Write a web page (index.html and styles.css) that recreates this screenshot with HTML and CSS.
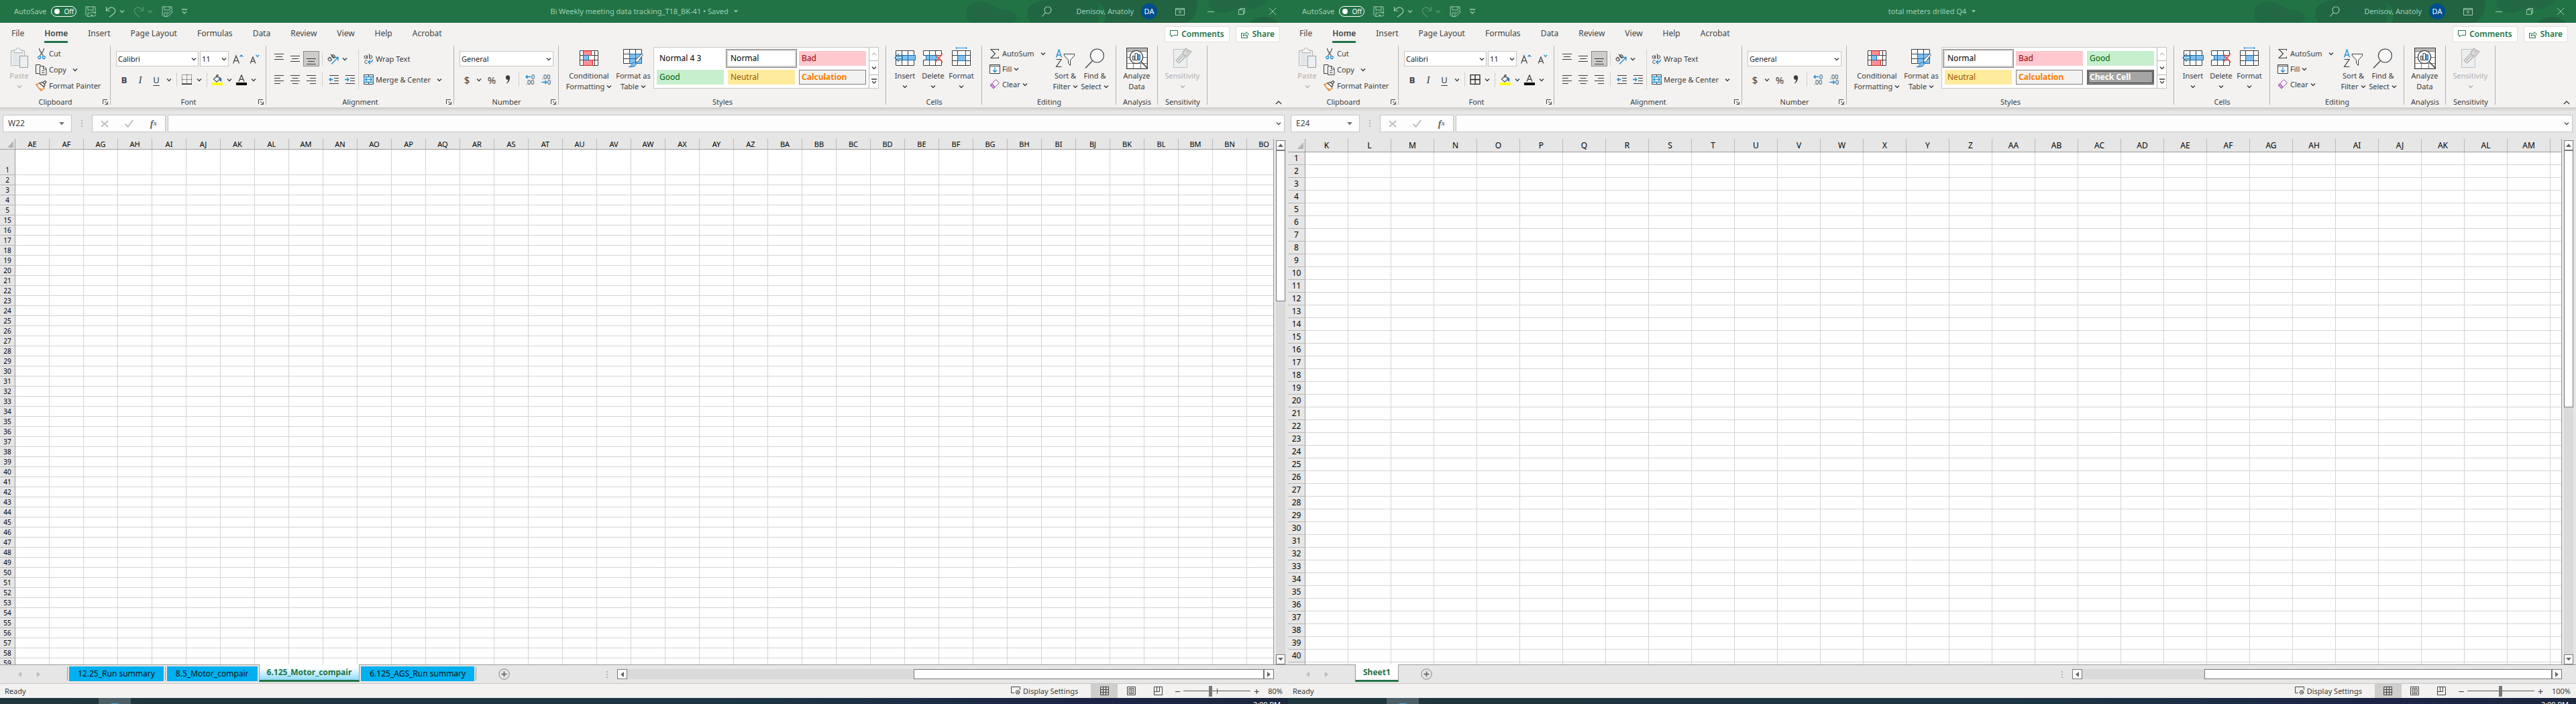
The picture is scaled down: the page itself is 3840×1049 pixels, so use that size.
FILE: index.html
```html
<!DOCTYPE html>
<html lang="en">
<head>
<meta charset="utf-8">
<title>Spreadsheets</title>
<link rel="stylesheet" href="styles.css">
</head>
<body>
<svg class="sprite" aria-hidden="true">
  <symbol id="caret" viewBox="0 0 8 6"><path d="M1 1.5l3 3 3-3" fill="none" stroke="currentColor" stroke-width="1.4"/></symbol>
  <symbol id="save" viewBox="0 0 17 17"><path d="M7 15.500H3L1 13.500V1h14v6M4 1v5h8V1M4 15.500V10h3" fill="none" stroke="currentColor"/><path d="M8 11.500a4 3.500 0 0 1 7-1.500M15.500 7.500V10.500H12.500M16 12.500a4 3.500 0 0 1-7 1.500M8.500 16.500V13.500H11.500" fill="none" stroke="currentColor"/></symbol>
  <symbol id="saveedit" viewBox="0 0 17 17"><path d="M7 15.500H3L1 13.500V1h14v5M4 1v5h8V1M4 15.500V10h5" fill="none" stroke="currentColor"/><path d="M7 16l1-3.500 6.500-5.500 1.800 2L10 14.800z" fill="none" stroke="currentColor"/></symbol>
  <symbol id="undo" viewBox="0 0 16 17"><path d="M1.500 1v6h6M2 6.500C5 2 10 1 13 3.500s2 6-.5 8L6 16.500" fill="none" stroke="currentColor" stroke-width="1.200"/></symbol>
  <symbol id="redo" viewBox="0 0 16 17"><path d="M14.500 1v6h-6M14 6.500C11 2 6 1 3 3.500s-2 6 .5 8L9 16.500" fill="none" stroke="currentColor" stroke-width="1.200"/></symbol>
  <symbol id="qat" viewBox="0 0 8 8"><path d="M0 1h8M1 4l3 3 3-3" fill="none" stroke="currentColor" stroke-width="1.300"/></symbol>
  <symbol id="tri" viewBox="0 0 8 5"><path d="M0 0h8L4 4.500z" fill="currentColor"/></symbol>
  <symbol id="search" viewBox="0 0 15 16"><circle cx="9" cy="6" r="5" fill="none" stroke="currentColor" stroke-width="1.100"/><path d="M5.500 9.500L.5 15.500" stroke="currentColor" stroke-width="1.100"/></symbol>
  <symbol id="ribbonopt" viewBox="0 0 14 11"><path d="M.5.5h13v10H.5zM.5 2.500h13M7 9V4.500M4.800 6.500L7 4.300l2.200 2.200" fill="none" stroke="currentColor"/></symbol>
  <symbol id="min" viewBox="0 0 10 10"><path d="M0 5.500h10" stroke="currentColor"/></symbol>
  <symbol id="restore" viewBox="0 0 10 10"><path d="M.5 2.500h7v7h-7zM2.500 2.500V.500h7v7h-2" fill="none" stroke="currentColor"/></symbol>
  <symbol id="close" viewBox="0 0 10 10"><path d="M0 0l10 10M10 0L0 10" stroke="currentColor"/></symbol>
  <symbol id="comment" viewBox="0 0 12 11"><path d="M.5.5h11v7H5l-2.500 2.500V7.500h-2z" fill="none" stroke="currentColor"/></symbol>
  <symbol id="share" viewBox="0 0 12 12"><path d="M4 4.500H.5v7h9V9M3 9c.5-3 2-4.500 5-4.500V2.500l3.500 3.500L8 9V7C6 7 4.500 7.500 3 9z" fill="none" stroke="currentColor"/></symbol>
  <symbol id="paste" viewBox="0 0 28 31"><path d="M1.500 4.500h20v22h-20z" fill="#eceff0" stroke="#b3b3b3"/><path d="M4 7h15v17H4z" fill="#e3e6e8"/><path d="M6 7.500v-4h3a3 3 0 0 1 6 0h3v4z" fill="#f8f8f8" stroke="#b3b3b3"/><path d="M14.500 12.500h12v17h-12z" fill="#eceff0" stroke="#9a9a9a"/></symbol>
  <symbol id="cut" viewBox="0 0 12 17"><path d="M2.500 0c0 4 3 6 6.500 12M9.500 0c0 4-3 6-6.500 12" fill="none" stroke="#555" stroke-width="1.200"/><circle cx="2.700" cy="13.600" r="1.900" fill="none" stroke="#1e8bcd" stroke-width="1.300"/><circle cx="9.300" cy="13.600" r="1.900" fill="none" stroke="#1e8bcd" stroke-width="1.300"/></symbol>
  <symbol id="copy" viewBox="0 0 17 16"><path d="M5.500 13.500h-5V.500H7l1 1" fill="none" stroke="#3b3b3b"/><path d="M6.500 2.500h5.500l4 4v9H6.500zM11.500 2.500v4.500h4.500" fill="#fff" stroke="#3b3b3b"/><path d="M9 9.500h4.500M9 12.500h4.500" stroke="#3b3b3b"/></symbol>
  <symbol id="painter" viewBox="0 0 17 16"><path d="M1 6l7 9 5-3.500-1-2.500-6-5z" fill="#fff" stroke="#e07b1a" stroke-width="1.400"/><path d="M3 9.500l5.500 5 3-2z" fill="#f0b070"/><path d="M6 4l6.500 5.500 1.500-3-4-4zM11 3l3-2.500L16 2l-3 3.500" fill="#fff" stroke="#444" stroke-width="1.200"/></symbol>
  <symbol id="growA" viewBox="0 0 16 14"><path d="M.7 13.500L5 2l4.500 11.500M2.200 9.700h6" fill="none" stroke="#444" stroke-width="1.300"/><path d="M10.500 3.500l2.300-2.300 2.300 2.300" fill="none" stroke="#1e8bcd" stroke-width="1.300"/></symbol>
  <symbol id="shrinkA" viewBox="0 0 16 14"><path d="M2.200 13.500L6 4l3.800 9.500M3.600 10.300h5" fill="none" stroke="#444" stroke-width="1.300"/><path d="M10.500 1l2.300 2.300L15.100 1" fill="none" stroke="#1e8bcd" stroke-width="1.300"/></symbol>
  <symbol id="borderDots" viewBox="0 0 16 15"><path d="M.5 0v13M7.500 0v13M14.500 0v13M0 .5h16M0 7.500h16" fill="none" stroke="#444" stroke-dasharray="1 1"/><path d="M0 14.200h15" stroke="#000" stroke-width="1.400"/></symbol>
  <symbol id="borderAll" viewBox="0 0 16 15"><path d="M1 .700h14v13.600H1zM8 .700v13.600M1 7.500h14" fill="none" stroke="#222" stroke-width="1.300"/></symbol>
  <symbol id="fillcolor" viewBox="0 0 16 16"><path d="M2.500 7l5-5 4.500 4.500-5 4.500z" fill="#fff" stroke="#444" stroke-width="1.100"/><path d="M7 5V.5h2V3" fill="none" stroke="#444"/><path d="M12 9.500V6.500l-1.500-2c3 0 4 2 3 5.500z" fill="#2b6ca8" stroke="#2b6ca8"/><path d="M0 12h16v4H0z" fill="#ff0"/></symbol>
  <symbol id="fontcolor" viewBox="0 0 16 16"><path d="M4 10.500L8 .8l4 9.700M5.300 7.300h5.400" fill="none" stroke="#444" stroke-width="1.300"/><path d="M0 12h16v4H0z" fill="#000"/></symbol>
  <symbol id="alTop" viewBox="0 0 14 16"><path d="M0 .5h14M2 4.500h10M0 8.500h14" stroke="#3b3b3b"/></symbol>
  <symbol id="alMid" viewBox="0 0 14 16"><path d="M0 3.500h14M2 7.500h10M0 11.500h14" stroke="#3b3b3b"/></symbol>
  <symbol id="alBot" viewBox="0 0 14 16"><path d="M0 7.500h14M2 11.500h10M0 15.500h14" stroke="#3b3b3b"/></symbol>
  <symbol id="left" viewBox="0 0 14 14"><path d="M0 .5h14M0 4.500h9M0 8.500h14M0 12.500h9" stroke="#3b3b3b"/></symbol>
  <symbol id="center" viewBox="0 0 14 14"><path d="M0 .5h14M2.500 4.500h9M0 8.500h14M2.500 12.500h9" stroke="#3b3b3b"/></symbol>
  <symbol id="right" viewBox="0 0 14 14"><path d="M0 .5h14M5 4.500h9M0 8.500h14M5 12.500h9" stroke="#3b3b3b"/></symbol>
  <symbol id="orient" viewBox="0 0 17 16"><g fill="none" stroke="#444" stroke-width="1.100"><ellipse cx="3.500" cy="8.500" rx="2" ry="2.600" transform="rotate(-45 3.500 8.500)"/><path d="M3 4.500l4 5M5 1l5.500 5.500"/><ellipse cx="9" cy="4" rx="2" ry="2.400" transform="rotate(-45 9 4)"/></g><path d="M6 15.500L15.500 6M11 5.500h5v5" fill="none" stroke="#1e8bcd" stroke-width="1.300"/></symbol>
  <symbol id="outdent" viewBox="0 0 15 14"><path d="M1 .5h14M8 4.500h7M8 8.500h7M1 12.500h14" stroke="#3b3b3b"/><path d="M6.500 6.500H1M3.500 4L1 6.500 3.500 9" fill="none" stroke="#1e8bcd" stroke-width="1.300"/></symbol>
  <symbol id="indent" viewBox="0 0 15 14"><path d="M1 .5h14M8 4.500h7M8 8.500h7M1 12.500h14" stroke="#3b3b3b"/><path d="M0 6.500h5.500M3.500 4L6 6.500 3.500 9" fill="none" stroke="#1e8bcd" stroke-width="1.300"/></symbol>
  <symbol id="wrap" viewBox="0 0 15 16"><g fill="none" stroke="#444"><ellipse cx="3" cy="5" rx="2" ry="2"/><path d="M5.500 2.500V7.500M8.500 0v7.500M5.500 10.500a2.300 2.300 0 1 0 0 3.500"/><ellipse cx="10.700" cy="5" rx="2" ry="2.200"/></g><path d="M13.500 9c0 3-1.500 3.500-6 3.500M10 9.500l-3 3 3 3" fill="none" stroke="#1e8bcd" stroke-width="1.400"/></symbol>
  <symbol id="merge" viewBox="0 0 15 15"><path d="M.5.500h14v14H.5zM7.500.500v3M7.500 11.500v3" fill="#fff" stroke="#3b3b3b"/><path d="M.7 3.500h13.600v8H.700z" fill="#e8f3fb" stroke="#1e8bcd" stroke-width="1.300"/><path d="M3 7.500h9M5 5L2.700 7.500 5 10M10 5l2.300 2.500L10 10" fill="none" stroke="#1e8bcd" stroke-width="1.200"/></symbol>
  <symbol id="comma" viewBox="0 0 8 13"><path d="M1 3.500a3 3 0 0 1 6-.5c.5 4-1.500 7.500-5 9.500l-.5-.5c2-1.500 3-3.500 3-5.500C2.500 7.500 1 6 1 3.500z" fill="#3b3b3b"/></symbol>
  <symbol id="arrowL" viewBox="0 0 9 7"><path d="M8.500 3.500H1M3.500 1L1 3.500 3.500 6" fill="none" stroke="#1e8bcd" stroke-width="1.300"/></symbol>
  <symbol id="arrowR" viewBox="0 0 9 7"><path d="M.5 3.500H8M5.500 1L8 3.500 5.500 6" fill="none" stroke="#1e8bcd" stroke-width="1.300"/></symbol>
  <symbol id="condfmt" viewBox="0 0 28 23"><path d="M.5.500h27v22H.500zM.5 7.500h27M.5 14.500h27M5.500 0v23M22.500 0v23" fill="#fff" stroke="#3b3b3b"/><path d="M5.500.700h12v7h-12zM5.500 14.500h14v8h-14z" fill="#ff8f95" stroke="#d22"/><path d="M5.500 7.500h8v7h-8z" fill="#83beec" stroke="#0a6cbd"/></symbol>
  <symbol id="fmttable" viewBox="0 0 30 29"><path d="M.5 1.500h27v21H.500zM.5 8.500h27M.5 15.500h27M9.500 1v22M18.500 1v22" fill="#fff" stroke="#3b3b3b"/><path d="M10 9h18v14H10z" fill="#83beec"/><path d="M18.500 9v14M9.500 15.500h18M9.500 8.500h18v14h-18z" fill="none" stroke="#0a6cbd"/><path d="M18 18L28 8l1.500 1.500L21 21z" fill="#fff" stroke="#555"/><path d="M8 27.500c3 0 4-1 5-4 1.500-3 4-3 6-1 1 3-3 6-11 5z" fill="#83beec" stroke="#0a6cbd"/></symbol>
  <symbol id="insert" viewBox="0 0 32 23"><path d="M2.500.500h27v22h-27zM2.500 7.500h27M2.500 14.500h27M11.500 0v23M20.500 0v23" fill="#fff" stroke="#3b3b3b"/><path d="M12 7.500h19.500v7H12z" fill="#83beec" stroke="#0a6cbd"/><path d="M20.500 8v6" stroke="#0a6cbd"/><path d="M12 9.500H4M12 12.500H4M7 5L1 11l6 6" fill="none" stroke="#1e8bcd" stroke-width="1.400"/></symbol>
  <symbol id="delete" viewBox="0 0 30 23"><path d="M.5.500h27v7H.500zM.5 14.500h27v8H.500zM9.500 0v7M18.500 0v7M9.500 15v8M18.500 15v8" fill="#fff" stroke="#3b3b3b"/><path d="M4.500 7.500H18l3 3.500-3 3.500H4.500zM9.500 8v6" fill="#83beec" stroke="#0a6cbd"/><path d="M18 5l11 13M29 5L18 18" stroke="#e8474a" stroke-width="1.500"/></symbol>
  <symbol id="format" viewBox="0 0 28 34"><path d="M.5 5.500h27v22H.500zM.5 12.500h27M.5 20.500h27M8.500 5v23M20.500 5v23" fill="#fff" stroke="#3b3b3b"/><path d="M8.500 12.500h12v8h-12z" fill="#83beec" stroke="#0a6cbd"/><path d="M6.500 0v3M21.500 0v3M6.500 1.500h15" stroke="#1e8bcd" stroke-width="1.200"/></symbol>
  <symbol id="sigma" viewBox="0 0 14 14"><path d="M12.500 2.500V.500H1l6.500 6.500L1 13.500h11.500v-2" fill="none" stroke="#3b3b3b" stroke-width="1.100"/></symbol>
  <symbol id="fill" viewBox="0 0 16 14"><path d="M.5.500h15v13H.500zM.5 2.500h15" fill="#fff" stroke="#3b3b3b"/><path d="M8 4v7.500M5 8.500l3 3 3-3" fill="none" stroke="#1e8bcd" stroke-width="1.300"/></symbol>
  <symbol id="clear" viewBox="0 0 16 15"><path d="M1 9L9.500.700l5 4.800L6 14z" fill="#fff" stroke="#8c3a9c"/><path d="M1 9l2.500-2.500 5 5L6 14z" fill="#cf9ad8" stroke="#8c3a9c"/></symbol>
  <symbol id="sort" viewBox="0 0 30 28"><path d="M1.500 12.500L5.500 1l4 11.500M2.800 9h5.400" fill="none" stroke="#1e8bcd" stroke-width="1.300"/><path d="M1.500 15.500h7.500l-7.500 11h8" fill="none" stroke="#3b3b3b" stroke-width="1.200"/><path d="M13 7.500h15.500v2.500l-6 6.500v8l-3-3v-5l-6-6.500z" fill="#fff" stroke="#3b3b3b"/></symbol>
  <symbol id="find" viewBox="0 0 30 30"><circle cx="18.500" cy="11" r="10" fill="#f8f8f8" stroke="#3b3b3b" stroke-width="1.200"/><path d="M11.500 18.500L1 29.500" stroke="#3b3b3b" stroke-width="1.200"/></symbol>
  <symbol id="analyze" viewBox="0 0 32 32"><path d="M.7.700h30.600v30.600H.700z" fill="#fff" stroke="#3b3b3b" stroke-width="1.300"/><path d="M1.500 1.500h29V5h-29z" fill="#b8b8b8"/><path d="M1 5.500h30M1 14.500h30M1 23.500h30M10.500 23v8M21.500 23v8" stroke="#777"/><circle cx="15" cy="14" r="9.700" fill="#fff" stroke="#3b3b3b" stroke-width="1.300"/><path d="M9.500 12.500h3v6h-3z" fill="#ccc" stroke="#444"/><path d="M13 8.500h3.500v10H13z" fill="#fff" stroke="#444"/><path d="M17 10.500h3.500v8H17z" fill="#5aa7e0" stroke="#2b6ca8"/><path d="M22 21l9.500 9.500" stroke="#3b3b3b" stroke-width="1.500"/></symbol>
  <symbol id="sensitivity" viewBox="0 0 28 31"><path d="M.5 2.500h20v27H.500z" fill="#eceff0" stroke="#bdbdbd"/><path d="M4 19L14 9l4.500 4.500-10 9.500z" fill="#e8e8e8" stroke="#b5b5b5" stroke-width="1.300"/><path d="M7 19.500l7.500-7M14 7l5-6 3.500 3-2 3 3-3 3.500 2-6 7-3-1.500-2 1z" fill="#d8d8d8" stroke="#b5b5b5" stroke-width="1.300"/></symbol>
  <symbol id="launcher" viewBox="0 0 8 8"><path d="M.5 7V.500H7M3 3l4 4M7.500 3.500v4h-4" fill="none" stroke="#444"/></symbol>
  <symbol id="chevUp" viewBox="0 0 10 6"><path d="M1 5l4-4 4 4" fill="none" stroke="currentColor" stroke-width="1.300"/></symbol>
  <symbol id="cancel" viewBox="0 0 12 11"><path d="M1 1l10 9M11 1L1 10" stroke="#bdbdbd" stroke-width="1.800"/></symbol>
  <symbol id="accept" viewBox="0 0 13 12"><path d="M1 7l3.500 4L12 1" fill="none" stroke="#bdbdbd" stroke-width="2"/></symbol>
  <symbol id="plus" viewBox="0 0 17 17"><circle cx="8.500" cy="8.500" r="7.700" fill="none" stroke="#808080"/><path d="M8.500 4.500v8M4.500 8.500h8" stroke="#707070" stroke-width="1.800"/></symbol>
  <symbol id="display" viewBox="0 0 15 13"><path d="M5 9.500H.500V.500h13V5" fill="none" stroke="#444"/><circle cx="10" cy="8.500" r="2.600" fill="none" stroke="#444" stroke-width="1.600" stroke-dasharray="1.600 .8"/><circle cx="10" cy="8.500" r="1" fill="#444"/></symbol>
  <symbol id="vNormal" viewBox="0 0 13 13"><path d="M.5.500h12v12H.500zM4.500 0v13M8.500 0v13M0 4.500h13M0 8.500h13" fill="none" stroke="#444"/></symbol>
  <symbol id="vPage" viewBox="0 0 13 13"><path d="M.5.500h12v12H.500zM3 2.500h7v8H3zM4.500 4.500h4M4.500 6.500h4M4.500 8.500h4" fill="none" stroke="#444"/></symbol>
  <symbol id="vBreak" viewBox="0 0 13 13"><path d="M.5.500h12v12H.500zM4.500 0v7.500M8.500 0v7.500M.5 7.500h8" fill="none" stroke="#444"/></symbol>
  <symbol id="blobs" viewBox="0 0 480 34"><g fill="#226342"><path d="M0 17C2 5 14 0 27 3s16 9 26 11 18 2 22 9-4 11-10 11H10C2 32-1 25 0 17z" opacity=".6"/><path d="M92 14C100-3 125-2 198 0v34H98c-6-4-9-12-6-20z" opacity=".8"/><path d="M196 0h148c4 12-3 26-14 34H204c10-12 2-22-8-34z"/><path d="M362 0h86c-6 10-20 16-34 14s-30 8-40 4-15-10-12-18z" opacity=".6"/><ellipse cx="444" cy="34" rx="20" ry="9"/></g></symbol>
</svg>
<div class="desktop" id="desktop"></div>
<script src="app.js"></script>
</body>
</html>
```
FILE: styles.css
```css
* { box-sizing: border-box; }

body {
  margin: 0;
  font-family: "Noto Sans", "Open Sans", sans-serif;
  font-size: 11px;
  line-height: 16px;
  color: #3b3b3b;
  background: #e6e6e6;
}

button, input, select {
  font: inherit;
  color: inherit;
  margin: 0;
  padding: 0;
  border: 0;
  background: none;
  border-radius: 0;
}

button {
  display: flex;
  align-items: center;
  justify-content: center;
  flex: none;
  white-space: nowrap;
}

svg { display: block; flex: none; }
.sprite { position: absolute; width: 0; height: 0; }

.desktop { display: grid; grid-template-columns: 1fr 1fr; height: 100vh; }
.window { display: flex; flex-direction: column; min-width: 0; min-height: 0; overflow: hidden; }

/* title bar */
.titlebar {
  position: relative;
  display: grid;
  grid-template-columns: 1fr auto 1fr;
  align-items: center;
  height: 34px;
  background: #217346;
  color: #a0cdb2;
}
.titlebar .pattern { position: absolute; right: 0; top: 0; }
.quick { display: flex; align-items: center; gap: 13px; padding-left: 21px; }
.quick button { gap: 5px; }
.quick .off { opacity: .4; }
.autosave { display: flex; align-items: center; gap: 7px; }
.switch {
  display: flex;
  align-items: center;
  gap: 6px;
  width: 38px;
  height: 16px;
  padding-left: 4px;
  border: 1px solid #fff;
  border-radius: 8px;
  font-size: 10px;
  color: #fff;
}
.switch input { appearance: none; width: 8px; height: 8px; border-radius: 50%; background: #fff; }
.doc { display: flex; align-items: center; gap: 8px; margin: 0; font-size: 11px; font-weight: 400; }
.system { position: relative; display: flex; align-items: center; justify-content: flex-end; }
.user { margin: 0 11px 0 36px; }
.avatar {
  width: 24px;
  height: 24px;
  margin-right: 11px;
  border-radius: 50%;
  background: #004e8c;
  color: #fff;
  line-height: 24px;
  text-align: center;
}
.system .sysbtn { width: 46px; height: 34px; }

/* ribbon tabs */
.tabs { display: flex; align-items: center; height: 33px; padding: 0 12px 0 17px; background: #f3f2f1; font-size: 12px; }
.tabs nav { display: flex; gap: 30px; flex: 1; }
.tabs a { display: block; color: #444; text-decoration: none; height: 26px; padding-top: 4px; }
.tabs a.on { font-weight: 600; border-bottom: 3px solid #217346; }
.tabs button {
  gap: 5px;
  height: 24px;
  margin-left: 9px;
  padding: 0 7px;
  background: #fff;
  border: 1px solid #e1dfdd;
  border-radius: 2px;
  color: #217346;
  font-weight: 600;
}

/* ribbon */
.ribbon { display: flex; padding: 1px 9px 2px 0; background: #f3f2f1; }
.group {
  display: flex;
  flex-direction: column;
  flex: none;
  background: linear-gradient(#b5b3b1, #b5b3b1) right top / 1px 88px no-repeat;
}
.group .body { display: flex; height: 78px; }
.group .name { position: relative; line-height: 12px; text-align: center; }
.group .name button { position: absolute; right: 4px; top: 2px; }
.clipboard { width: 165px; }
.font { width: 232px; }
.alignment { width: 280px; }
.number { width: 156px; }
.styles { width: 488px; }
.cells { width: 143px; }
.editing { width: 200px; }
.analysis { width: 62px; }
.sensitivity { width: 74px; }
.clipboard .body { padding-left: 4px; }
.styles .body { padding-left: 8px; }
.cells .body { padding-left: 7px; }
.editing .body { padding-left: 11px; }
.collapse { margin: auto 0 2px auto; }

.big { flex-direction: column; justify-content: flex-start; align-self: flex-start; width: 42px; }
.big .pic { display: flex; align-items: center; justify-content: center; height: 37px; }
.big .line { display: flex; align-items: center; gap: 3px; height: 16px; }
.big.w49 { width: 49px; }
.big.w44 { width: 44px; }
.big.w58 { width: 58px; }
.big.w61 { width: 61px; }
.big.w73 { width: 73px; }
.big.w74 { width: 74px; }
.dim { color: #b1afad; }

.list { display: flex; flex-direction: column; }
.list .item { display: flex; height: 23px; }
.clipboard .list .item { height: 24px; }
.list .item .label, .wraps .label { gap: 3px; }
.list .pic { display: flex; justify-content: center; width: 17px; }
.editing .list { width: 91px; }
.editing .list .pic { width: 16px; }
.drop { width: 14px; }
.drop.far { margin-left: 6px; }

.rows { display: flex; flex-direction: column; gap: 8px; padding: 8px 0 0 8px; }
.rows .row { display: flex; align-items: center; height: 23px; }
.alignment .rows { padding-left: 7px; }
.alignment .toolset { width: 137px; }
.tool { width: 24px; height: 23px; font-size: 13px; }
.tool.slim { width: 22px; }
.tool.on { background: #cfcdcb; border: 1px solid #8a8886; }
.tool.bold { font-weight: 700; }
.tool.ital { font-family: "Liberation Serif", serif; font-style: italic; font-size: 15px; }
.tool.under { text-decoration: underline; text-underline-offset: 3px; }
.tool.sym { font-size: 15px; }
.sep { width: 1px; height: 21px; margin: 0 4px; background: #d2d0ce; }
.longsep { width: 1px; height: 59px; margin-top: 6px; background: #d2d0ce; }
.digits { flex-direction: column; font-size: 9px; line-height: 8px; }
.digits span { display: flex; align-items: center; }

.pick { position: relative; display: block; margin-right: 2px; }
.pick select {
  display: block;
  appearance: none;
  width: 123px;
  height: 23px;
  padding-left: 2px;
  background: #fff;
  border: 1px solid #c8c6c4;
  color: #222;
}
.pick svg { position: absolute; right: 3px; top: 9px; }
.pick.size select { width: 43px; }
.pick.numfmt select { width: 140px; }

/* cell styles gallery */
.gallery { display: flex; align-self: flex-start; width: 336px; margin: 2px 0 0 1px; background: #fff; border: 1px solid #c8c6c4; }
.swatches { display: grid; grid-template-columns: repeat(3, 100px); gap: 6px; padding: 5px 4px; }
.swatch { justify-content: flex-start; height: 22px; padding-left: 4px; font-size: 12px; color: #000; background: #fff; }
.swatch.current { box-shadow: 0 0 0 2px #d2d0ce, 0 0 0 3px #858381; }
.swatch.bad { background: #ffc7ce; color: #9c0006; }
.swatch.good { background: #c6efce; color: #006100; }
.swatch.neutral { background: #ffeb9c; color: #9c5700; }
.swatch.calc { background: #f2f2f2; color: #fa7d00; font-weight: 700; border: 1px solid #7f7f7f; padding-left: 3px; }
.swatch.check { background: #a5a5a5; color: #fff; font-weight: 700; border: 3px double #3f3f3f; padding-left: 1px; }
.galscroll { display: flex; flex-direction: column; flex: 1; }
.galscroll button { flex: 1; border-left: 1px solid #b5b3b1; border-bottom: 1px solid #b5b3b1; }
.galscroll button:last-child { border-bottom: 0; }

/* formula bar */
.formula {
  display: flex;
  align-items: center;
  padding: 11px 5px 10px 4px;
  background: linear-gradient(#cdcbc9, #e6e6e6 6px);
}
.namebox, .fx, .entry { display: flex; align-items: center; height: 26px; background: #fdfdfd; border: 1px solid #c6c6c6; }
.namebox { width: 103px; padding-right: 10px; color: #777; }
.namebox input { flex: 1; min-width: 0; padding-left: 7px; font-size: 12px; color: #444; }
.dots { display: flex; flex-direction: column; gap: 2px; margin: 0 14px; }
.dots i { width: 2px; height: 2px; background: #b0b0b0; }
.fx { justify-content: space-around; width: 110px; margin-right: 3px; }
.fx .fn { font-family: "Liberation Serif", serif; font-style: italic; font-weight: 700; font-size: 15px; color: #666; }
.fx .fn small { font-size: 10px; }
.entry { flex: 1; padding-right: 4px; color: #555; }
.entry input { flex: 1; }

/* grid */
.sheet { display: flex; flex: 1; min-height: 0; }
.cellsarea { flex: 1; min-width: 0; overflow: hidden; border-right: 1px solid #9b9b9b; background: linear-gradient(#e6e6e6, #e6e6e6) top / 100% 15px no-repeat #fff; }
.grid { table-layout: fixed; width: 0; border-collapse: separate; border-spacing: 0; color: #000; line-height: 14px; }
.grid th, .grid td { padding: 0; border-right: 1px solid #d4d4d4; border-bottom: 1px solid #d4d4d4; height: 15px; }
.grid th { background: #e6e6e6; font-weight: 400; text-align: center; border-right-color: #b8b8b8; }
.grid thead th { border-bottom-color: #9b9b9b; }
.grid tbody th, .grid .corner { border-right-color: #9b9b9b; }
.grid tbody th { font-size: 10px; vertical-align: bottom; border-bottom-color: #b8b8b8; }
.grid .corner svg { margin-left: auto; color: #b4b4b4; }
.grid .tall th, .grid .tall td { height: 38px; }
.grid.z80 col { width: 51px; }
.grid.z80 col.heads { width: 23px; }
.grid.z80 thead th { height: 16px; }
.grid.z100 { font-size: 12px; }
.grid.z100 col { width: 64px; }
.grid.z100 col.heads { width: 26px; }
.grid.z100 thead th { height: 20px; }
.grid.z100 tbody th { height: 19px; font-size: 12px; line-height: 18px; }

.vscroll { display: flex; flex-direction: column; width: 14px; margin: 2px 4px 0 3px; background: #dadada; }
.vscroll button { height: 15px; }
.vscroll .track { flex: 1; }
.vscroll button, .hscroll button, .thumb { background: #fff; border: 1px solid #777; color: #666; }
.hscroll { display: flex; height: 15px; margin-right: 21px; background: #dadada; }
.hscroll button { width: 15px; }
.hscroll .track { display: flex; justify-content: flex-end; flex: 1; }

/* sheet tabs */
.sheetbar { display: flex; height: 28px; border-top: 1px solid #9b9b9b; background: #e6e6e6; }
.sheetbar .pager { display: flex; width: 100px; padding-left: 15px; color: #bcbcbc; }
.sheetbar .pager button { width: 28px; height: 27px; }
.sheettabs { display: flex; flex: 1; align-items: flex-start; font-size: 12px; color: #111; }
.sheettabs .tab { height: 22px; margin: 2px 2px 0; padding: 0 13px; background: #00b0f0; }
.sheettabs .edge { width: 1px; height: 20px; margin-top: 3px; background: #9b9b9b; }
.sheettabs .tab.on {
  height: 26px;
  margin: -1px 0 0;
  padding: 0 11px;
  background: linear-gradient(#fff 20%, #8fdcf8);
  border: 1px solid #9b9b9b;
  border-top: 0;
  border-bottom: 3px solid #217346;
  color: #217346;
  font-weight: 700;
}
.sheettabs .tab.on.plain { background: #fff; }
.sheettabs .add { margin: 5px 0 0 33px; }
.sheetbar .dots { align-self: center; }
.sheetbar .hscroll { align-self: center; }

/* status bar */
.status { display: flex; align-items: center; height: 22px; padding: 0 8px 0 7px; background: #f3f2f1; border-top: 1px solid #c8c6c4; }
.status .ready { flex: 1; }
.status .display { gap: 3px; margin-right: 19px; }
.status .view { width: 40px; height: 21px; }
.status .view.on { background: #d0cecc; }
.status .zoom { width: 18px; font-size: 15px; }
.status input {
  appearance: none;
  width: 100px;
  height: 16px;
  background:
    linear-gradient(#555, #555) center / 100% 1px no-repeat,
    linear-gradient(#555, #555) center / 1px 8px no-repeat;
}
.status input::-webkit-slider-thumb { appearance: none; width: 5px; height: 16px; background: #777; }
.status output { margin-left: 8px; }

/* taskbar */
.taskbar { display: flex; justify-content: space-between; height: 9px; overflow: hidden; background: linear-gradient(90deg, #20373f, #1d3444 60%, #1b2446 85%, #1b2840); color: #fff; padding: 0 11px 0 147px; }
.taskbar .app { display: flex; align-items: flex-end; justify-content: center; width: 48px; background: #4d5f66; }
.taskbar .app i { width: 10px; height: 1px; background: #3fb4e0; }
.taskbar time { margin-top: 4px; line-height: 12px; }
```
FILE: app.js
```js
const icon = (id, w, h) => `<svg width="${w}" height="${h}" aria-hidden="true"><use href="#${id}"/></svg>`;
const caret = icon('caret', 8, 6);
const drop = (label, extra = '') => `<button class="drop ${extra}" aria-label="${label}">${caret}</button>`;
const tool = (id, w, h, label, cls = '') => `<button class="tool ${cls}" aria-label="${label}">${icon(id, w, h)}</button>`;
const sep = '<span class="sep"></span>';

const big = (id, w, h, lines, cls = '') => `
  <button class="big ${cls}"><span class="pic">${icon(id, w, h)}</span>${
    lines.map(l => `<span class="line">${l.replace('^', caret)}</span>`).join('')}</button>`;

const item = (id, w, h, text, after = '') => `
  <div class="item"><button class="label"><span class="pic">${icon(id, w, h)}</span>${text}</button>${after}</div>`;

const group = (cls, name, body, launcher) => `
  <section class="group ${cls}"><div class="body">${body}</div>
  <div class="name">${name}${launcher ? `<button aria-label="${name} settings">${icon('launcher', 8, 8)}</button>` : ''}</div></section>`;

const pick = (cls, label, value) => `
  <label class="pick ${cls}"><select aria-label="${label}"><option>${value}</option></select>${caret}</label>`;

const dots = '<span class="dots"><i></i><i></i><i></i></span>';

function titlebar(w) {
  return `<header class="titlebar">
    <svg class="pattern" width="480" height="34" aria-hidden="true"><use href="#blobs"/></svg>
    <div class="quick">
      <label class="autosave">AutoSave<span class="switch"><input type="checkbox" role="switch">Off</span></label>
      <button aria-label="Save">${icon('save', 17, 17)}</button>
      <button aria-label="Undo">${icon('undo', 16, 17)}${caret}</button>
      <button class="off" aria-label="Redo">${icon('redo', 16, 17)}${caret}</button>
      <button aria-label="Save as">${icon('saveedit', 17, 17)}</button>
      <button aria-label="Customize">${icon('qat', 8, 8)}</button>
    </div>
    <h1 class="doc">${w.title}${icon('tri', 6, 4)}</h1>
    <div class="system">
      <button aria-label="Search">${icon('search', 15, 16)}</button>
      <span class="user">Denisov, Anatoly</span><span class="avatar">DA</span>
      <button class="sysbtn" aria-label="Ribbon display">${icon('ribbonopt', 14, 11)}</button>
      <button class="sysbtn" aria-label="Minimize">${icon('min', 10, 10)}</button>
      <button class="sysbtn" aria-label="Restore">${icon('restore', 10, 10)}</button>
      <button class="sysbtn" aria-label="Close">${icon('close', 10, 10)}</button>
    </div></header>`;
}

function tabs() {
  const names = ['File', 'Home', 'Insert', 'Page Layout', 'Formulas', 'Data', 'Review', 'View', 'Help', 'Acrobat'];
  return `<div class="tabs"><nav>${
    names.map(n => `<a href="#"${n === 'Home' ? ' class="on"' : ''}>${n}</a>`).join('')}</nav>
    <button>${icon('comment', 12, 11)}Comments</button><button>${icon('share', 12, 12)}Share</button></div>`;
}

function ribbon(w) {
  return `<div class="ribbon">${
    group('clipboard', 'Clipboard', big('paste', 28, 31, ['Paste', '^'], 'w49 dim') + `<div class="list">${
      item('cut', 12, 17, 'Cut')}${item('copy', 17, 16, 'Copy', drop('Copy options', 'far'))}${item('painter', 17, 16, 'Format Painter')}</div>`, true)}${
    group('font', 'Font', `<div class="rows"><div class="row">${
      pick('', 'Font', 'Calibri')}${pick('size', 'Font size', '11')}${
      tool('growA', 16, 14, 'Increase font size')}${tool('shrinkA', 16, 14, 'Decrease font size')}</div>
      <div class="row"><button class="tool bold">B</button><button class="tool ital">I</button><button class="tool under">U</button>${
      drop('Underline')}${sep}${tool(w.border, 16, 15, 'Borders', 'slim')}${drop('Borders')}${sep}${
      tool('fillcolor', 16, 16, 'Fill color', 'slim')}${drop('Fill color')}${
      tool('fontcolor', 16, 16, 'Font color', 'slim')}${drop('Font color')}</div></div>`, true)}${
    group('alignment', 'Alignment', `<div class="rows toolset"><div class="row">${
      tool('alTop', 14, 16, 'Top')}${tool('alMid', 14, 16, 'Middle')}${tool('alBot', 14, 16, 'Bottom', 'on')}${sep}${
      tool('orient', 17, 16, 'Orientation', 'slim')}${drop('Orientation')}</div>
      <div class="row">${tool('left', 14, 14, 'Left')}${tool('center', 14, 14, 'Center')}${tool('right', 14, 14, 'Right')}${sep}${
      tool('outdent', 15, 14, 'Decrease indent')}${tool('indent', 15, 14, 'Increase indent')}</div></div>
      <span class="longsep"></span><div class="rows wraps">
      <div class="row"><button class="label">${icon('wrap', 15, 16)}Wrap Text</button></div>
      <div class="row"><button class="label">${icon('merge', 15, 15)}Merge &amp; Center</button>${drop('Merge options', 'far')}</div></div>`, true)}${
    group('number', 'Number', `<div class="rows"><div class="row">${pick('numfmt', 'Number format', 'General')}</div>
      <div class="row"><button class="tool slim sym">$</button>${drop('Currency')}<button class="tool sym">%</button>${
      tool('comma', 8, 13, 'Comma style')}${sep}
      <button class="tool digits"><span>${icon('arrowL', 9, 7)}0</span><span>.00</span></button>
      <button class="tool digits"><span>.00</span><span>${icon('arrowR', 9, 7)}0</span></button></div></div>`, true)}${
    group('styles', 'Styles', big('condfmt', 28, 23, ['Conditional', 'Formatting ^'], 'w74') +
      big('fmttable', 30, 29, ['Format as', 'Table ^'], 'w58') + `<div class="gallery"><div class="swatches">${
      w.styles.map(([n, c]) => `<button class="swatch ${c}">${n}</button>`).join('')}</div>
      <div class="galscroll"><button class="dim" aria-label="Up">${icon('chevUp', 8, 5)}</button><button aria-label="Down">${caret}</button><button aria-label="More">${icon('qat', 8, 8)}</button></div></div>`)}${
    group('cells', 'Cells', big('insert', 32, 23, ['Insert', '^']) + big('delete', 30, 23, ['Delete', '^']) + big('format', 28, 34, ['Format', '^']))}${
    group('editing', 'Editing', `<div class="list">${
      item('sigma', 14, 14, 'AutoSum', drop('Sum options', 'far'))}${item('fill', 16, 14, 'Fill', drop('Fill options'))}${item('clear', 16, 15, 'Clear', drop('Clear options'))}</div>` +
      big('sort', 30, 28, ['Sort &amp;', 'Filter ^'], 'w44') + big('find', 30, 30, ['Find &amp;', 'Select ^'], 'w44'))}${
    group('analysis', 'Analysis', big('analyze', 32, 32, ['Analyze', 'Data'], 'w61'))}${
    group('sensitivity', 'Sensitivity', big('sensitivity', 28, 31, ['Sensitivity', '^'], 'w73 dim'))}
    <button class="collapse" aria-label="Collapse ribbon">${icon('chevUp', 10, 6)}</button></div>`;
}

function formula(w) {
  return `<div class="formula"><div class="namebox"><input aria-label="Name box" value="${w.cell}">${icon('tri', 8, 5)}</div>${dots}
    <div class="fx"><button aria-label="Cancel">${icon('cancel', 12, 11)}</button><button aria-label="Enter">${icon('accept', 13, 12)}</button><button class="fn">f<small>x</small></button></div>
    <div class="entry"><input aria-label="Formula">${icon('caret', 8, 6)}</div></div>`;
}

const letters = n => (n > 26 ? String.fromCharCode(64 + Math.floor((n - 1) / 26)) : '') + String.fromCharCode(65 + (n - 1) % 26);
const range = (a, b) => Array.from({ length: b - a + 1 }, (_, i) => a + i);

function grid(w) {
  const cols = range(w.firstCol, w.lastCol).map(letters).concat(w.spareCol ? [''] : []);
  const cells = '<td></td>'.repeat(cols.length);
  return `<div class="sheet"><div class="cellsarea"><table class="grid ${w.zoomClass}">
    <colgroup><col class="heads">${'<col>'.repeat(cols.length)}</colgroup>
    <thead><tr><th class="corner"><svg width="12" height="12" viewBox="0 0 12 12"><path d="M10 1v10H1z" fill="currentColor"/></svg></th>${cols.map(c => `<th>${c}</th>`).join('')}</tr></thead>
    <tbody>${w.rows.map(r => `<tr${r === w.tallRow ? ' class="tall"' : ''}><th>${r}</th>${cells}</tr>`).join('')}</tbody></table></div>
    <div class="vscroll"><button aria-label="Scroll up"><svg width="8" height="5"><path d="M0 5h8L4 0z" fill="currentColor"/></svg></button>
    <div class="track"><div class="thumb" style="height:${w.vThumb}%"></div></div>
    <button aria-label="Scroll down">${icon('tri', 8, 5)}</button></div></div>`;
}

function sheetbar(w) {
  const prev = '<svg width="5" height="8"><path d="M5 0v8L0 4z" fill="currentColor"/></svg>';
  const next = '<svg width="5" height="8"><path d="M0 0v8l5-4z" fill="currentColor"/></svg>';
  return `<div class="sheetbar"><div class="pager"><button aria-label="Previous sheet">${prev}</button><button aria-label="Next sheet">${next}</button></div>
    <div class="sheettabs">${w.tabs}<button class="add" aria-label="New sheet">${icon('plus', 17, 17)}</button></div>${dots}
    <div class="hscroll" style="width:${w.hWidth}%"><button aria-label="Scroll left">${prev}</button><div class="track"><div class="thumb" style="width:${w.hThumb}%"></div></div><button aria-label="Scroll right">${next}</button></div></div>`;
}

function status(w) {
  return `<footer class="status"><span class="ready">Ready</span><button class="display">${icon('display', 15, 13)}Display Settings</button>
    <button class="view on" aria-label="Normal view">${icon('vNormal', 13, 13)}</button><button class="view" aria-label="Page layout">${icon('vPage', 13, 13)}</button><button class="view" aria-label="Page breaks">${icon('vBreak', 13, 13)}</button>
    <button class="zoom" aria-label="Zoom out">−</button><input type="range" min="0" max="200" value="${w.zoom}" aria-label="Zoom"><button class="zoom" aria-label="Zoom in">+</button><output>${w.zoom}%</output></footer>
    <div class="taskbar"><span class="app"><i></i></span><time>2:00 PM</time></div>`;
}

const edge = '<span class="edge"></span>';
const windows = [
  {
    title: 'Bi Weekly meeting data tracking_T18_BK-41 • Saved', border: 'borderDots', cell: 'W22',
    styles: [['Normal 4 3', ''], ['Normal', 'current'], ['Bad', 'bad'], ['Good', 'good'], ['Neutral', 'neutral'], ['Calculation', 'calc']],
    firstCol: 31, lastCol: 67, zoomClass: 'z80', zoom: 80, tallRow: 1, rows: [1, 2, 3, 4, 5, ...range(15, 59)],
    vThumb: 30, hWidth: 51, hThumb: 55,
    tabs: `${edge}<button class="tab">12.25_Run summary</button>${edge}<button class="tab">8.5_Motor_compair</button><button class="tab on">6.125_Motor_compair</button><button class="tab">6.125_AGS_Run summary</button>${edge}`
  },
  {
    title: 'total meters drilled Q4', border: 'borderAll', cell: 'E24',
    styles: [['Normal', 'current'], ['Bad', 'bad'], ['Good', 'good'], ['Neutral', 'neutral'], ['Calculation', 'calc'], ['Check Cell', 'check']],
    firstCol: 11, lastCol: 39, spareCol: true, zoomClass: 'z100', zoom: 100, rows: [...range(1, 40), ''],
    vThumb: 51, hWidth: 38, hThumb: 74,
    tabs: '<button class="tab on plain">Sheet1</button>'
  }
];

document.getElementById('desktop').innerHTML = windows.map(w =>
  `<main class="window">${titlebar(w)}${tabs()}${ribbon(w)}${formula(w)}${grid(w)}${sheetbar(w)}${status(w)}</main>`).join('');
```
